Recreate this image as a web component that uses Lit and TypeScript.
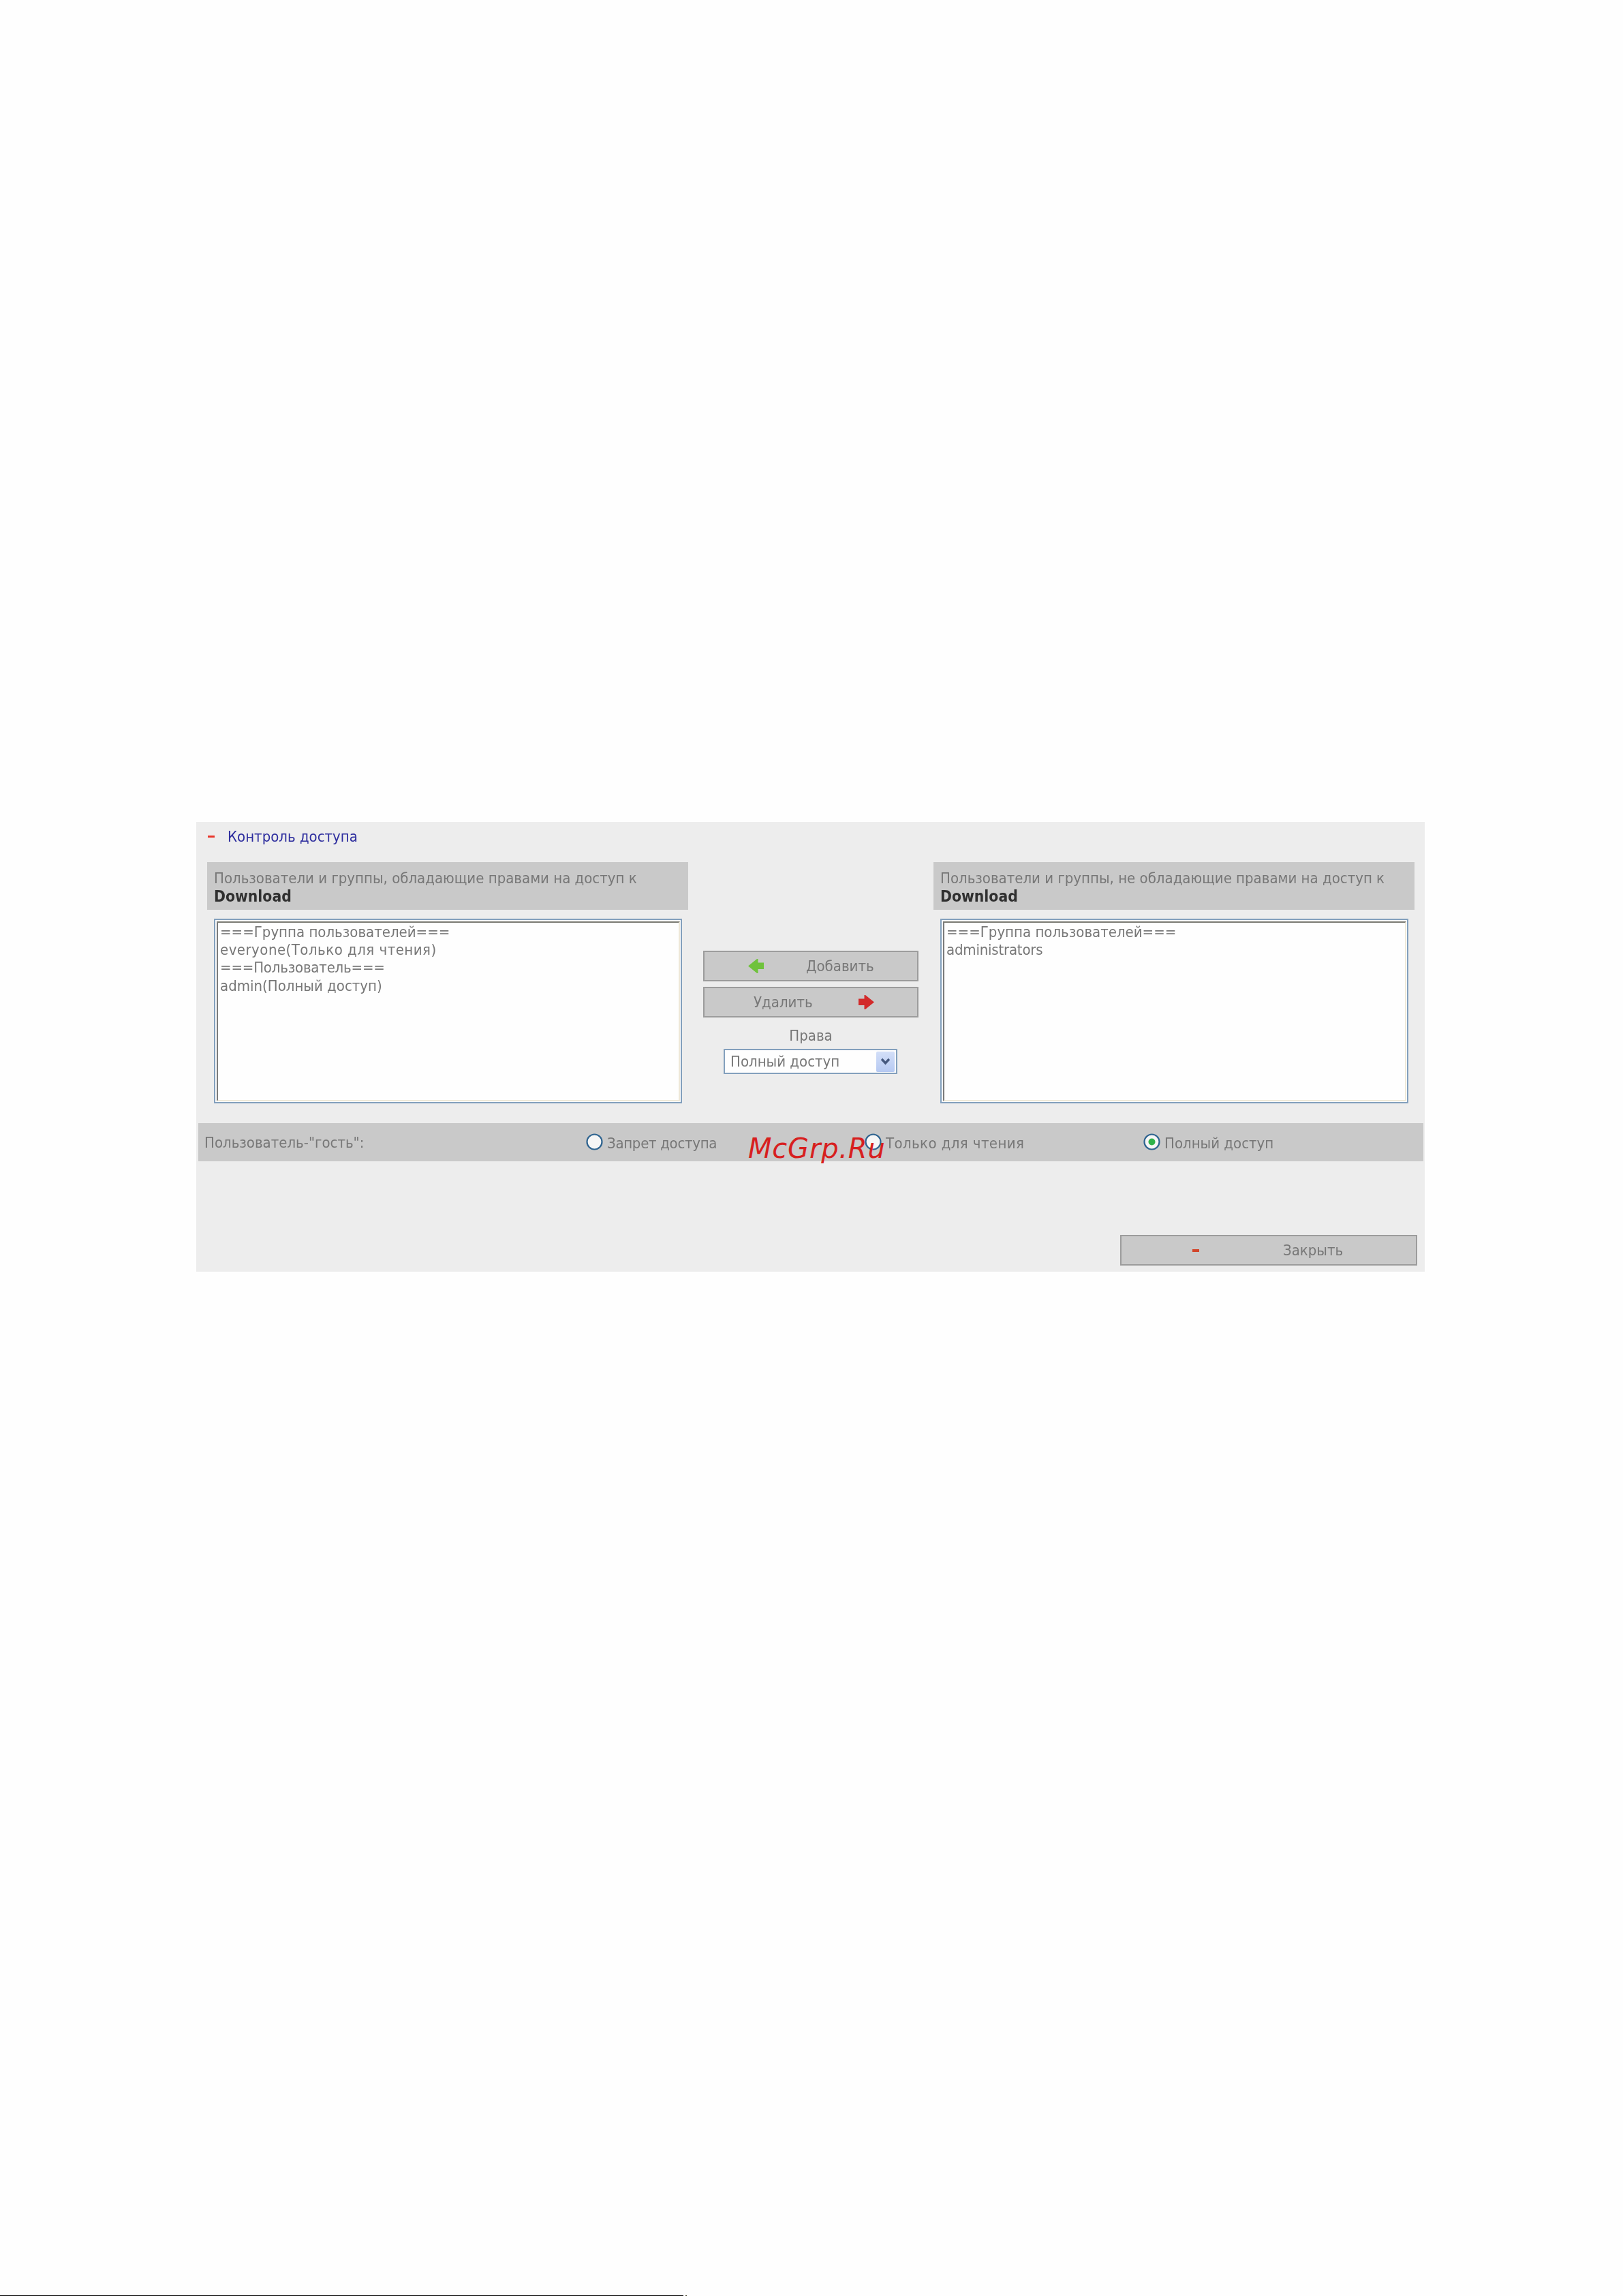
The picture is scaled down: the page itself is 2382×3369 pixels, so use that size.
import { LitElement, html, css, svg } from "lit";
import { customElement } from "lit/decorators.js";

const arrowLeft = svg`<path d="M0 10.5 L13 0 L14.5 0 L14.5 5.5 L23 5.5 L23 15 L14.5 15 L14.5 21 L13 21 Z" fill="#6fc23c"/>`;
const arrowRight = svg`<path d="M23 10.5 L10 0 L8.5 0 L8.5 5.5 L0 5.5 L0 15 L8.5 15 L8.5 21 L10 21 Z" fill="#d22a2a"/>`;

type Line = { text: string; spacing?: number };

@customElement("app-root")
export class AppRoot extends LitElement {
  static styles = css`
    :host {
      display: flex;
      flex-direction: column;
      height: 3369px;
      background: #fefefe;
      font-family: "DejaVu Sans Condensed", "DejaVu Sans", sans-serif;
      font-size: 22px;
      color: #777777;
      overflow: hidden;
    }
    .panel {
      position: relative;
      width: 1803px;
      height: 660px;
      margin: 1206px 0 0 288px;
      background: #ededed;
    }
    .content {
      display: flex;
      flex-direction: column;
      height: 100%;
      filter: blur(0.6px);
    }
    .title {
      display: flex;
      align-items: center;
      height: 59px;
      padding: 0 0 17px 17px;
      box-sizing: border-box;
      color: #2d2d9e;
    }
    .minus {
      width: 10px;
      height: 3px;
      background: #e8352a;
      margin-right: 19px;
    }
    .columns {
      display: grid;
      grid-template-columns: 706px 360px 706px;
      padding-left: 16px;
    }
    .header {
      height: 70px;
      box-sizing: border-box;
      padding: 11px 10px 0;
      background: #c9c9c9;
      line-height: 26px;
      white-space: nowrap;
    }
    .header b {
      display: block;
      color: #303030;
      font-size: 22.7px;
    }
    .list {
      height: 271px;
      margin: 13px 9px 0 10px;
      box-sizing: border-box;
      border: 2px solid #83a0bd;
      background: #fefefe;
      padding: 2px 1px 1px 2px;
    }
    .list-in {
      height: 100%;
      box-sizing: border-box;
      border-top: 2px solid #7a7a72;
      border-left: 2px solid #7b7b7b;
      border-bottom: 2px solid #efe9d9;
      border-right: 2px solid #efe9d9;
      padding: 1px 0 0 3px;
      line-height: 26.2px;
      white-space: nowrap;
    }
    .middle {
      display: flex;
      flex-direction: column;
      padding: 130px 0 0 22px;
    }
    .btn {
      display: flex;
      align-items: center;
      width: 316px;
      height: 45px;
      box-sizing: border-box;
      border: 2px solid #9c9c9c;
      background: #c9c9c9;
      padding: 0;
      font: inherit;
      color: inherit;
    }
    .btn svg { width: 23px; height: 21px; flex: none; }
    .add { padding-left: 64px; gap: 62px; }
    .del { margin-top: 8px; padding-left: 72px; gap: 67px; }
    .rights {
      width: 316px;
      margin-top: 13px;
      text-align: center;
      line-height: 28px;
    }
    .select {
      display: flex;
      align-items: center;
      justify-content: space-between;
      width: 255px;
      height: 37px;
      margin: 5px 0 0 30px;
      box-sizing: border-box;
      border: 2px solid #83a0bd;
      background: #fefefe;
      padding: 0 2px 0 8px;
    }
    .caret {
      display: flex;
      align-items: center;
      justify-content: center;
      width: 27px;
      height: 30px;
      border-radius: 2px;
      background: linear-gradient(#d3dff8, #b6c9f2);
    }
    .caret svg { width: 15px; height: 11px; }
    .guest {
      display: grid;
      grid-template-columns: 569px 409px 409px 1fr;
      align-items: center;
      height: 56px;
      margin: 29px 2px 0 3px;
      box-sizing: border-box;
      background: #c9c9c9;
    }
    .guest-label { padding-left: 9px; }
    .opt { display: flex; align-items: center; gap: 6px; }
    .opt-label { padding-top: 3px; }
    .radio { width: 25px; height: 25px; flex: none; margin-bottom: 2px; }
    .foot {
      display: flex;
      justify-content: flex-end;
      padding: 108px 11px 0 0;
    }
    .close {
      width: 436px;
      padding: 0 0 0 104px;
    }
    .close .dash {
      width: 10px;
      height: 4px;
      background: #d2452a;
      margin-right: 123px;
    }
    .mark {
      position: absolute;
      left: 810px;
      top: 456px;
      font-family: "DejaVu Sans", sans-serif;
      font-style: italic;
      font-size: 40px;
      line-height: 46px;
      letter-spacing: 0.8px;
      color: #d71f1f;
    }
    .rule {
      position: relative;
      margin-top: auto;
      width: 1003px;
      height: 1px;
      background: #000;
    }
    .rule::after {
      content: "";
      position: absolute;
      left: 1006px;
      width: 2px;
      height: 1px;
      background: #3a3a20;
    }
  `;

  private radio(on: boolean) {
    return html`<svg class="radio" viewBox="0 0 25 25">
      <circle cx="12.5" cy="12.5" r="11" fill="#f6f6f6" stroke="#2f6490" stroke-width="2.2" />
      ${on ? svg`<circle cx="12.5" cy="12.5" r="5" fill="#2fb24a" />` : ""}
    </svg>`;
  }

  private column(title: string, lines: Line[]) {
    return html`<div>
      <div class="header">${title}<b>Download</b></div>
      <div class="list">
        <div class="list-in">
          ${lines.map((l) => html`<div style="letter-spacing:${l.spacing ?? 0}px">${l.text}</div>`)}
        </div>
      </div>
    </div>`;
  }

  private option(label: string, spacing: number, on = false) {
    return html`<div class="opt">
      ${this.radio(on)}<span class="opt-label" style="letter-spacing:${spacing}px">${label}</span>
    </div>`;
  }

  render() {
    return html`
      <div class="panel">
        <div class="content">
          <div class="title"><span class="minus"></span>Контроль доступа</div>
          <div class="columns">
            ${this.column("Пользователи и группы, обладающие правами на доступ к", [
              { text: "===Группа пользователей===" },
              { text: "everyone(Только для чтения)", spacing: 0.48 },
              { text: "===Пользователь===", spacing: -0.2 },
              { text: "admin(Полный доступ)" },
            ])}
            <div class="middle">
              <button class="btn add"><svg viewBox="0 0 23 21">${arrowLeft}</svg>Добавить</button>
              <button class="btn del">Удалить<svg viewBox="0 0 23 21">${arrowRight}</svg></button>
              <div class="rights">Права</div>
              <div class="select">
                <span>Полный доступ</span>
                <span class="caret"><svg viewBox="0 0 15 11"><path d="M2 2 L7.5 8 L13 2" fill="none" stroke="#46597f" stroke-width="3.4" /></svg></span>
              </div>
            </div>
            ${this.column("Пользователи и группы, не обладающие правами на доступ к", [
              { text: "===Группа пользователей===" },
              { text: "administrators", spacing: -0.2 },
            ])}
          </div>
          <div class="guest">
            <div class="guest-label">Пользователь-"гость":</div>
            ${this.option("Запрет доступа", -0.3)}
            ${this.option("Только для чтения", 0.4)}
            ${this.option("Полный доступ", 0, true)}
          </div>
          <div class="foot">
            <button class="btn close"><span class="dash"></span>Закрыть</button>
          </div>
        </div>
        <div class="mark">McGrp.Ru</div>
      </div>
      <div class="rule"></div>
    `;
  }
}
